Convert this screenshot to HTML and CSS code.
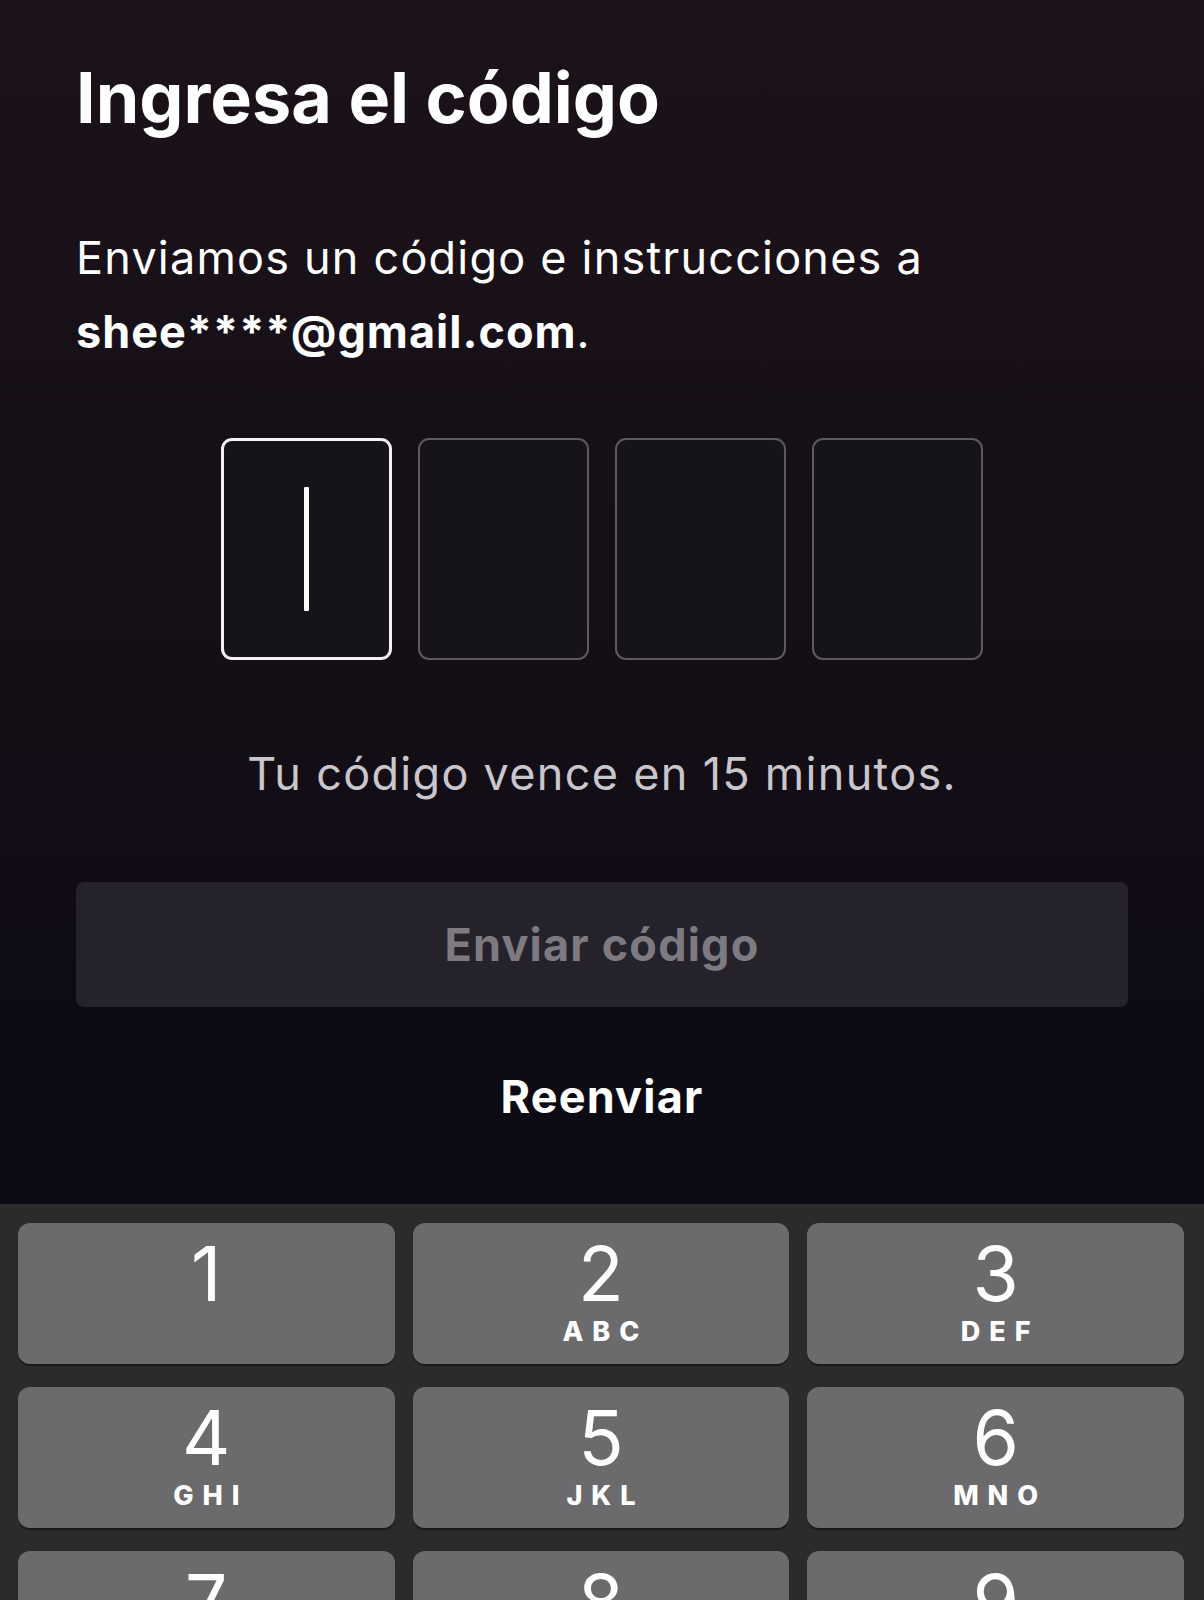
FILE: index.html
```html
<!DOCTYPE html>
<html lang="es">
<head>
<meta charset="utf-8">
<title>Ingresa el código</title>
<link rel="stylesheet" href="styles.css">
</head>
<body>
<div class="page">
  <main class="content">
    <h1 class="title">Ingresa el código</h1>
    <p class="lead">Enviamos un código e instrucciones a<br><strong>shee****@gmail.com</strong>.</p>
    <div class="code">
      <div class="cell cell-active"><span class="caret"></span></div>
      <div class="cell"></div>
      <div class="cell"></div>
      <div class="cell"></div>
    </div>
    <p class="expire">Tu código vence en 15 minutos.</p>
    <button class="submit" type="button">Enviar código</button>
    <div class="resend">Reenviar</div>
  </main>
  <section class="keypad">
    <div class="key"><span class="digit">1</span><span class="letters"></span></div>
    <div class="key"><span class="digit">2</span><span class="letters">ABC</span></div>
    <div class="key"><span class="digit">3</span><span class="letters">DEF</span></div>
    <div class="key"><span class="digit">4</span><span class="letters">GHI</span></div>
    <div class="key"><span class="digit">5</span><span class="letters">JKL</span></div>
    <div class="key"><span class="digit">6</span><span class="letters">MNO</span></div>
    <div class="key"><span class="digit">7</span><span class="letters">PQRS</span></div>
    <div class="key"><span class="digit">8</span><span class="letters">TUV</span></div>
    <div class="key"><span class="digit">9</span><span class="letters">WXYZ</span></div>
  </section>
</div>
</body>
</html>
```
FILE: styles.css
```css
* { box-sizing: border-box; }
html, body { margin: 0; padding: 0; }
body {
  background: #0a0912;
  font-family: Inter, Roboto, "Liberation Sans", sans-serif;
  color: #fff;
}
.page {
  width: 1204px;
  height: 1600px;
  overflow: hidden;
  display: flex;
  flex-direction: column;
  background: linear-gradient(180deg, #1c1219 0%, #150e17 40%, #0c0a13 70%, #090811 100%);
}
.content {
  flex: 1;
  display: flex;
  flex-direction: column;
  padding: 63px 76px 0;
}
.title {
  margin: 0;
  font-size: 70px;
  line-height: 70px;
  font-weight: 700;
  letter-spacing: 0;
}
.lead {
  margin: 88px 0 0;
  font-size: 45px;
  line-height: 73.5px;
  font-weight: 400;
  letter-spacing: 1.2px;
}
.lead strong { font-weight: 700; letter-spacing: 1px; }
.code {
  margin-top: 70px;
  display: flex;
  justify-content: center;
  gap: 26px;
}
.cell {
  width: 171px;
  height: 222px;
  border: 2px solid #5b5a60;
  border-radius: 11px;
  background: #161418;
  display: flex;
  align-items: center;
  justify-content: center;
}
.cell-active { border: 3px solid #f2f2f2; }
.caret {
  width: 5px;
  height: 124px;
  background: #fff;
  border-radius: 1px;
}
.expire {
  margin: 88px 0 0;
  text-align: center;
  font-size: 45px;
  line-height: 52.8px;
  color: #c9c6cc;
  letter-spacing: 1.3px;
}
.submit {
  margin-top: 81px;
  height: 125px;
  width: 100%;
  border: 0;
  border-radius: 8px;
  background: #25222b;
  color: #7d7a82;
  font-family: inherit;
  font-size: 45px;
  font-weight: 700;
  letter-spacing: 1.2px;
}
.resend {
  margin-top: 64px;
  text-align: center;
  font-size: 45px;
  line-height: 52.8px;
  font-weight: 700;
  letter-spacing: 1.2px;
}
.keypad {
  height: 396px;
  flex: none;
  background: #2b2b2d;
  padding: 19px 20px 0 18px;
  display: grid;
  grid-template-columns: repeat(3, 1fr);
  grid-auto-rows: 141px;
  column-gap: 18px;
  row-gap: 23px;
  overflow: hidden;
}
.key {
  background: #6b6b6d;
  border-radius: 12px;
  box-shadow: 0 2px 0 #19191b;
  display: flex;
  flex-direction: column;
  align-items: center;
  padding-top: 14px;
}
.digit {
  font-size: 75px;
  line-height: 74px;
  font-weight: 400;
}
.letters {
  margin-top: 7px;
  font-size: 27px;
  line-height: 27px;
  font-weight: 800;
  letter-spacing: 9px;
  margin-right: -9px;
}
```
